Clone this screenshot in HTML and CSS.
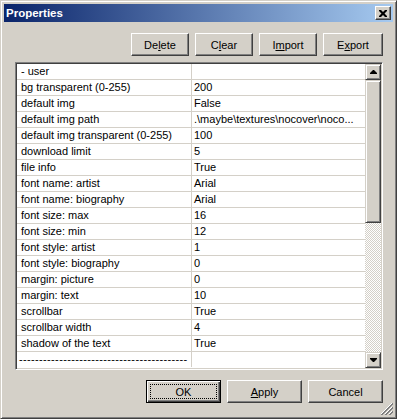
FILE: index.html
```html
<!DOCTYPE html>
<html lang="en">
<head>
    <meta charset="UTF-8">
    <title>Properties</title>
    <link rel="stylesheet" href="styles.css">
</head>
<body>
    <div class="window">
        <div class="titlebar">
            <span class="title">Properties</span>
            <button class="close-btn" type="button">
                <svg width="8" height="7" viewBox="0 0 8 7"><path d="M0 0h2l2 2 2-2h2v1l-2.5 2.5 2.5 2.5v1h-2l-2-2-2 2h-2v-1l2.5-2.5-2.5-2.5z" fill="#000"/></svg>
            </button>
        </div>

        <div class="toolbar">
            <button class="btn" type="button">De<u>l</u>ete</button>
            <button class="btn" type="button">C<u>l</u>ear</button>
            <button class="btn" type="button">I<u>m</u>port</button>
            <button class="btn btn-wide" type="button">E<u>x</u>port</button>
        </div>

        <div class="listbox">
            <div class="grid">
                <div class="row"><div class="name">- user</div><div class="value"></div></div>
                <div class="row"><div class="name">bg transparent (0-255)</div><div class="value">200</div></div>
                <div class="row"><div class="name">default img</div><div class="value">False</div></div>
                <div class="row"><div class="name">default img path</div><div class="value">.\maybe\textures\nocover\noco...</div></div>
                <div class="row"><div class="name">default img transparent (0-255)</div><div class="value">100</div></div>
                <div class="row"><div class="name">download limit</div><div class="value">5</div></div>
                <div class="row"><div class="name">file info</div><div class="value">True</div></div>
                <div class="row"><div class="name">font name: artist</div><div class="value">Arial</div></div>
                <div class="row"><div class="name">font name: biography</div><div class="value">Arial</div></div>
                <div class="row"><div class="name">font size: max</div><div class="value">16</div></div>
                <div class="row"><div class="name">font size: min</div><div class="value">12</div></div>
                <div class="row"><div class="name">font style: artist</div><div class="value">1</div></div>
                <div class="row"><div class="name">font style: biography</div><div class="value">0</div></div>
                <div class="row"><div class="name">margin: picture</div><div class="value">0</div></div>
                <div class="row"><div class="name">margin: text</div><div class="value">10</div></div>
                <div class="row"><div class="name">scrollbar</div><div class="value">True</div></div>
                <div class="row"><div class="name">scrollbar width</div><div class="value">4</div></div>
                <div class="row"><div class="name">shadow of the text</div><div class="value">True</div></div>
                <div class="row row-sep"><div class="name">------------------------------------------</div><div class="value"></div></div>
            </div>
            <div class="scrollbar">
                <div class="sb-btn">
                    <svg width="7" height="4" viewBox="0 0 7 4"><path d="M3 0h1l3 3v1h-7v-1z" fill="#000"/></svg>
                </div>
                <div class="sb-thumb"></div>
                <div class="sb-track"></div>
                <div class="sb-btn">
                    <svg width="7" height="4" viewBox="0 0 7 4"><path d="M0 0h7v1l-3 3h-1l-3-3z" fill="#000"/></svg>
                </div>
            </div>
        </div>

        <div class="footer">
            <button class="btn btn-dialog btn-default" type="button">OK</button>
            <button class="btn btn-dialog" type="button"><u>A</u>pply</button>
            <button class="btn btn-dialog" type="button">Cancel</button>
        </div>

        <div class="grip">
            <svg width="12" height="12" viewBox="0 0 12 12">
                <path d="M11 0L0 11M11 4L4 11M11 8L8 11" stroke="#fff" stroke-width="1" shape-rendering="crispEdges"/>
                <path d="M12 0L0 12M12 1L1 12M12 4L4 12M12 5L5 12M12 8L8 12M12 9L9 12" stroke="#808080" stroke-width="1" shape-rendering="crispEdges"/>
            </svg>
        </div>
    </div>
</body>
</html>
```

FILE: styles.css
```css
/* classic dialog look */
body {
    margin: 0;
    font-family: "Liberation Sans", Arial, sans-serif;
    font-size: 11px;
    color: #000;
    background: #d4d0c8;
}

.window {
    position: relative;
    width: 397px;
    height: 419px;
    box-sizing: border-box;
    padding: 3px;
    background: #d4d0c8;
    border: 1px solid;
    border-color: #d4d0c8 #404040 #404040 #d4d0c8;
    box-shadow: inset 1px 1px #fff, inset -1px -1px #808080;
    display: flex;
    flex-direction: column;
}

.titlebar {
    height: 18px;
    display: flex;
    align-items: center;
    justify-content: space-between;
    padding: 0 2px;
    background: linear-gradient(to right, #0a246a, #a6caf0);
}

.title {
    color: #fff;
    font-weight: bold;
    font-size: 11.5px;
}

.close-btn {
    width: 16px;
    height: 14px;
    padding: 0;
    display: flex;
    align-items: center;
    justify-content: center;
    background: #d4d0c8;
    border: 1px solid;
    border-color: #fff #404040 #404040 #fff;
    box-shadow: inset -1px -1px #808080;
}

.btn {
    height: 23px;
    padding: 0;
    font-family: "Liberation Sans", Arial, sans-serif;
    font-size: 11px;
    color: #000;
    background: #d4d0c8;
    border: 1px solid;
    border-color: #fff #404040 #404040 #fff;
    box-shadow: inset -1px -1px #808080;
}

.toolbar {
    display: flex;
    justify-content: flex-end;
    gap: 6px;
    margin-top: 11px;
    padding-right: 10px;
}

.toolbar .btn {
    width: 58px;
}

.toolbar .btn-wide {
    width: 60px;
}

.listbox {
    margin: 6px 10px 0 11px;
    height: 308px;
    box-sizing: border-box;
    display: flex;
    background: #fff;
    border: 1px solid;
    border-color: #808080 #fff #fff #808080;
    box-shadow: inset 1px 1px #404040, inset -1px -1px #d4d0c8;
    padding: 1px;
}

.grid {
    flex: 1;
    overflow: hidden;
}

.row {
    display: flex;
    height: 15px;
    line-height: 15px;
    border-bottom: 1px solid #d4d0c8;
}

.name {
    width: 170px;
    padding-left: 4px;
    border-right: 1px solid #d4d0c8;
    white-space: nowrap;
    overflow: hidden;
}

.value {
    flex: 1;
    padding-left: 2px;
    white-space: nowrap;
    overflow: hidden;
}

.row-sep {
    border-bottom: none;
}

.row-sep .name {
    padding-left: 2px;
    width: 172px;
    letter-spacing: 0.35px;
}

.scrollbar {
    width: 16px;
    display: flex;
    flex-direction: column;
}

.sb-btn {
    width: 16px;
    height: 16px;
    box-sizing: border-box;
    display: flex;
    align-items: center;
    justify-content: center;
    background: #d4d0c8;
    border: 1px solid;
    border-color: #d4d0c8 #404040 #404040 #d4d0c8;
    box-shadow: inset 1px 1px #fff, inset -1px -1px #808080;
}

.sb-thumb {
    height: 143px;
    box-sizing: border-box;
    background: #d4d0c8;
    border: 1px solid;
    border-color: #d4d0c8 #404040 #404040 #d4d0c8;
    box-shadow: inset 1px 1px #fff, inset -1px -1px #808080;
}

.sb-track {
    flex: 1;
    background: repeating-conic-gradient(#fff 0 25%, #d4d0c8 0 50%) 0 0 / 2px 2px;
}

.footer {
    display: flex;
    justify-content: flex-end;
    gap: 6px;
    margin-top: 10px;
    padding-right: 10px;
}

.btn-dialog {
    width: 75px;
}

.btn-default {
    position: relative;
    border: 1px solid #000;
    box-shadow: inset 1px 1px #fff, inset -1px -1px #404040, inset -2px -2px #808080;
}

.btn-default::after {
    content: "";
    position: absolute;
    top: 3px;
    left: 3px;
    right: 3px;
    bottom: 3px;
    border: 1px dotted #000;
}

.grip {
    position: absolute;
    right: 3px;
    bottom: 3px;
    width: 12px;
    height: 12px;
}
```
